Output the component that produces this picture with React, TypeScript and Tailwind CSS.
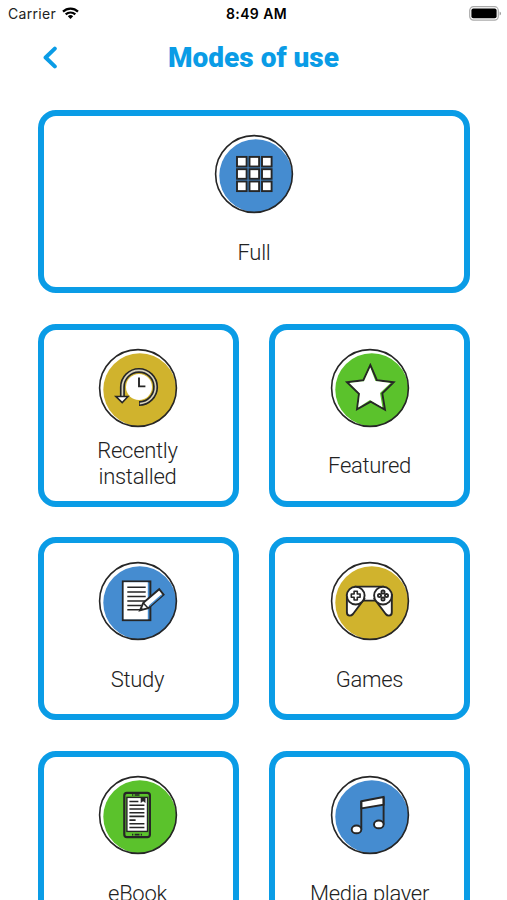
import type { ReactNode } from 'react';

const INK = '#262626';
const BLUE = '#458cd0';
const GOLD = '#d0b32d';
const GREEN = '#5bc22c';

interface BadgeProps {
  color: string;
  children: ReactNode;
}

function Badge({ color, children }: BadgeProps) {
  return (
    <svg className="size-20 shrink-0" viewBox="0 0 80 80" fill="none" stroke={INK} strokeWidth="1.9">
      <circle cx="40" cy="40" r="38.4" fill="#fff" stroke="none" />
      <circle cx="41.8" cy="41.8" r="36.5" fill={color} stroke="none" />
      <circle cx="40" cy="40" r="38.4" strokeWidth="1.6" />
      {children}
    </svg>
  );
}

function FullIcon() {
  const steps = [0, 1, 2];
  return (
    <Badge color={BLUE}>
      {steps.map((row) =>
        steps.map((col) => (
          <rect
            key={`${row}-${col}`}
            x={23 + col * 12.5}
            y={22.9 + row * 12.3}
            width="9.6"
            height="9.6"
            fill="#fff"
          />
        )),
      )}
    </Badge>
  );
}

function RecentIcon() {
  return (
    <Badge color={GOLD}>
      <circle cx="41" cy="39" r="13" fill="#fff" stroke="none" />
      <path d="M24.4 49V39A16.6 16.6 0 1 1 41 55.6" strokeWidth="5" />
      <path d="M24.4 49V39A16.6 16.6 0 1 1 41.8 55.6" stroke="#d8d3bd" strokeWidth="1.7" />
      <path d="M17.8 48.4H30L24.2 54.6Z" fill="#fff" strokeWidth="1.5" />
      <path d="M41 29.4V38.4H47.4" />
    </Badge>
  );
}

function StarIcon() {
  return (
    <Badge color={GREEN}>
      <path
        d="M40.3 17L47 32.3L63.7 34.3L52.3 45.3L55 61.7L40.7 53.7L27 61.3L29 45.7L17 34.3L33.3 32.3Z"
        fill={GREEN}
      />
      <path
        d="M40.3 19.5L45.4 33L60.5 35L50 45L52.4 59.3L40 52L28.2 59.5L30 45.5L19.4 35.1L34 33.2Z"
        fill="#fff"
        stroke="none"
      />
    </Badge>
  );
}

function StudyIcon() {
  return (
    <Badge color={BLUE}>
      <rect x="24.8" y="20.4" width="27.6" height="38.8" fill={BLUE} />
      <path d="M25.7 21.3H49.8V58.3H25.7Z" fill="#fff" stroke="none" />
      <path
        d="M29.3 26.3H47.7M29.3 31H47.7M29.3 35.6H47.7M29.3 40H47.7M29.3 44.4H43.5M29.3 48.8H42"
        strokeWidth="1.5"
      />
      <path d="M42 49.3L45.3 41.9L61.2 28.2L65.6 33.6L50.2 47.2Z" fill="#fff" />
      <path d="M45.3 41.9L50.2 47.2M42 49.3L44.2 46.8" strokeWidth="1.5" />
      <path d="M51.2 45L64 33.8" stroke={BLUE} strokeWidth="1.4" />
    </Badge>
  );
}

function GamesIcon() {
  return (
    <Badge color={GOLD}>
      <path d="M25.5 25.6H53V39.6H25.5Z" fill="#fff" />
      <path d="M16.9 34V51.2Q16.9 54.6 19.8 54.6Q21.6 54.6 23 53L34.2 38Z" fill="#fff" />
      <path d="M61.8 34V51.2Q61.8 54.6 58.9 54.6Q57.1 54.6 55.7 53L44.5 38Z" fill="#fff" />
      <circle cx="25.7" cy="34.6" r="8.9" fill="#fff" />
      <circle cx="53" cy="34.6" r="8.9" fill="#fff" />
      <path
        d="M24.1 30.2H27.3V33H30.1V36.2H27.3V39H24.1V36.2H21.3V33H24.1Z"
        strokeWidth="1.6"
        strokeLinejoin="round"
      />
      <g strokeWidth="1.8">
        <circle cx="53" cy="31.1" r="1.6" />
        <circle cx="53" cy="38.1" r="1.6" />
        <circle cx="49.5" cy="34.6" r="1.6" />
        <circle cx="56.5" cy="34.6" r="1.6" />
      </g>
    </Badge>
  );
}

function EbookIcon() {
  return (
    <Badge color={GREEN}>
      <rect x="26.3" y="17.8" width="25.6" height="44.4" rx="2.6" fill={GREEN} strokeWidth="2.2" />
      <rect x="28.9" y="22.4" width="20.6" height="34" fill="#fff" strokeWidth="1.4" />
      <path d="M34 20H35.3M36.7 20H41.5M34 59.6H35.3M36.7 59.6H41.5M42.8 59.6H44" strokeWidth="1.6" />
      <path
        d="M31.4 26.5H40.4M31.4 30.2H46.4M31.4 34H46.4M31.4 37.8H46.4M31.4 41.4H46.4M31.4 45.1H37.6M31.4 48.8H46.4M31.4 52.5H46.4"
        strokeWidth="1.6"
      />
      <path d="M42.7 22.4H47.5V28L45.1 26.2L42.7 28Z" fill={INK} stroke="none" />
    </Badge>
  );
}

function MusicIcon() {
  return (
    <Badge color={BLUE}>
      <path d="M31.3 26.2L53.6 22V29.6L31.3 33.4Z" fill="#fff" />
      <path d="M31.3 26V54.4M53.6 22V49.4" />
      <ellipse cx="26.5" cy="54.4" rx="4.8" ry="3.9" fill="#fff" />
      <ellipse cx="48.8" cy="49.4" rx="4.8" ry="3.9" fill="#fff" />
    </Badge>
  );
}

interface ModeCardProps {
  icon: ReactNode;
  label: string;
  className?: string;
  labelClass?: string;
}

function ModeCard({ icon, label, className = '', labelClass = 'pt-1' }: ModeCardProps) {
  return (
    <button
      type="button"
      className={`flex h-[183px] flex-col items-center rounded-[18px] border-[6px] border-[#0a9ce6] pt-[18px] ${className}`}
    >
      {icon}
      <span
        className={`flex h-[73px] w-[130px] items-center justify-center text-center text-[22px] leading-[26px] font-light tracking-[-0.3px] text-[#222] ${labelClass}`}
      >
        {label}
      </span>
    </button>
  );
}

function StatusBar() {
  return (
    <div className="flex h-[26px] items-center justify-between pr-[6px] pl-2 font-['Inter'] text-[14px] text-black">
      <div className="flex w-[160px] items-center gap-[6px]">
        <span className="tracking-[0.3px] text-[#222]">Carrier</span>
        <svg className="h-3 w-[17px]" viewBox="0 0 17 12" fill="none" stroke="#000" strokeWidth="2.2">
          <path d="M1 4.6A10.8 10.8 0 0 1 16 4.6" />
          <path d="M3.7 7.4A7 7 0 0 1 13.3 7.4" />
          <path d="M8.5 12L5.8 9.3A3.9 3.9 0 0 1 11.2 9.3Z" fill="#000" stroke="none" />
        </svg>
      </div>
      <span className="pl-1 font-semibold tracking-[0.4px]">8:49 AM</span>
      <div className="flex w-[160px] justify-end">
        <svg className="h-[15px] w-8" viewBox="0 0 32 15">
          <rect x="0.7" y="0.7" width="28.6" height="13.4" rx="3.8" fill="#fff" stroke="#aaa" strokeWidth="1.2" />
          <rect x="2.4" y="2.5" width="25.2" height="9.8" rx="2" fill="#000" />
          <path d="M30.6 5.4Q32 6 32 7.4Q32 8.8 30.6 9.4Z" fill="#999" />
        </svg>
      </div>
    </div>
  );
}

export default function App() {
  return (
    <div className="h-[900px] w-[507px] overflow-hidden bg-white font-['Roboto',sans-serif]">
      <StatusBar />
      <header className="grid h-[62px] grid-cols-[80px_1fr_80px] items-center">
        <button type="button" className="pl-[42px]" aria-label="Back">
          <svg className="h-[23px] w-4" viewBox="0 0 16 23" fill="none" stroke="#0a9ce6" strokeWidth="4">
            <path d="M12.8 2.6L3.6 11.5L12.8 20.4" strokeLinecap="round" strokeLinejoin="round" />
          </svg>
        </button>
        <h1 className="pt-0.5 text-center text-[28px] font-black text-[#0a9ce6]">Modes of use</h1>
      </header>
      <main className="mt-[22px] grid grid-cols-2 gap-x-[30px] gap-y-[30.7px] pr-[37px] pl-[38px]">
        <ModeCard className="col-span-2" icon={<FullIcon />} label="Full" />
        <ModeCard className="pr-0.5" icon={<RecentIcon />} label="Recently installed" labelClass="" />
        <ModeCard icon={<StarIcon />} label="Featured" />
        <ModeCard className="pr-0.5" icon={<StudyIcon />} label="Study" />
        <ModeCard icon={<GamesIcon />} label="Games" />
        <ModeCard className="pr-0.5" icon={<EbookIcon />} label="eBook" />
        <ModeCard icon={<MusicIcon />} label="Media player" />
      </main>
    </div>
  );
}
